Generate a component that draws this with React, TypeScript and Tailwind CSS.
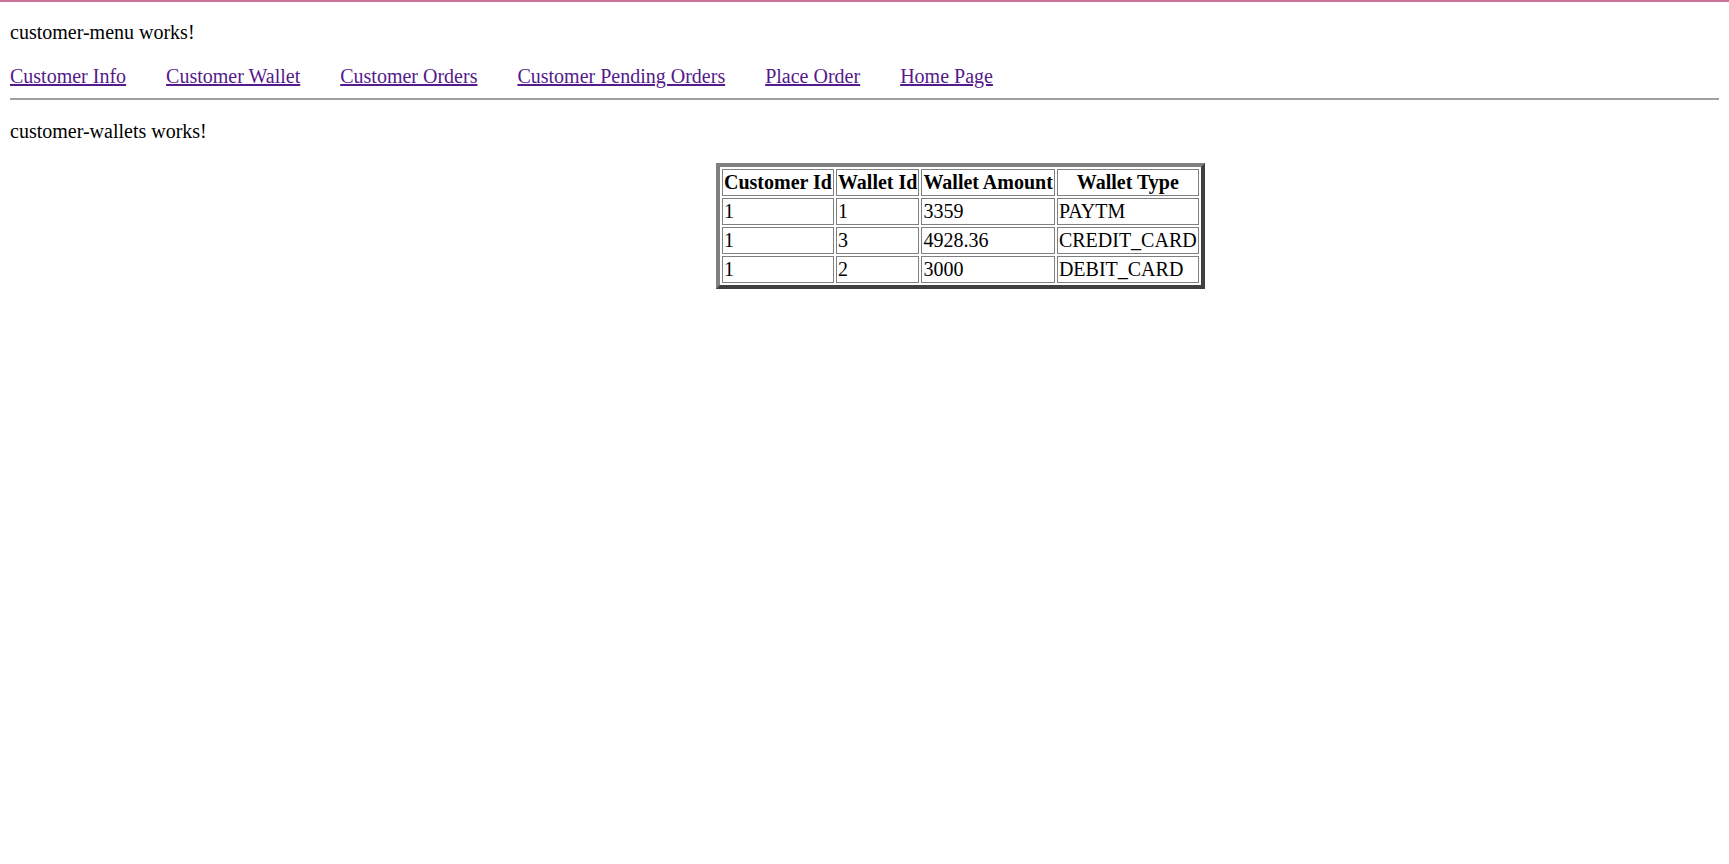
const links = [
  'Customer Info',
  'Customer Wallet',
  'Customer Orders',
  'Customer Pending Orders',
  'Place Order',
  'Home Page',
]

const wallets = [
  { customerId: 1, walletId: 1, amount: '3359', type: 'PAYTM' },
  { customerId: 1, walletId: 3, amount: '4928.36', type: 'CREDIT_CARD' },
  { customerId: 1, walletId: 2, amount: '3000', type: 'DEBIT_CARD' },
]

export default function App() {
  const cell = 'border border-solid border-[#808080] px-[1px] py-[1px] text-left font-normal'
  const head = 'border border-solid border-[#808080] px-[1px] py-[1px] text-center font-bold'

  return (
    <div className="min-h-[864px] bg-white text-black text-[20px] leading-[23px] font-['Liberation_Serif',_'Times_New_Roman',_serif]">
      {/* top accent line */}
      <div className="h-[2px] bg-[#cc7399]" />

      <div className="px-[10px] pt-[19px]">
        <p>customer-menu works!</p>

        <nav className="mt-[21px] flex gap-10">
          {links.map((l) => (
            <a key={l} href="#" className="text-[#551a8b] underline">
              {l}
            </a>
          ))}
        </nav>

        <hr className="mt-[10px] border-0 border-t-2 border-[#a0a0a0]" />

        <p className="mt-[20px]">customer-wallets works!</p>

        {/* wallets table */}
        <table className="mt-[20px] ml-[706px] border-separate border-spacing-[2px] border-[4px] border-solid border-t-[#808080] border-l-[#808080] border-r-[#404040] border-b-[#404040]">
          <thead>
            <tr>
              <th className={head}>Customer Id</th>
              <th className={head}>Wallet Id</th>
              <th className={head}>Wallet Amount</th>
              <th className={head}>Wallet Type</th>
            </tr>
          </thead>
          <tbody>
            {wallets.map((w) => (
              <tr key={w.walletId}>
                <td className={cell}>{w.customerId}</td>
                <td className={cell}>{w.walletId}</td>
                <td className={cell}>{w.amount}</td>
                <td className={cell}>{w.type}</td>
              </tr>
            ))}
          </tbody>
        </table>
      </div>
    </div>
  )
}
